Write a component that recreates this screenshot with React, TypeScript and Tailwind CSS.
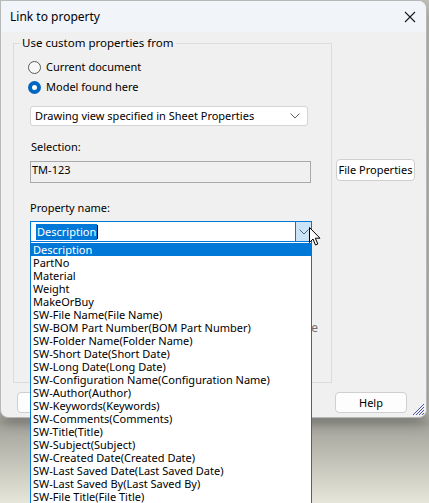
import React from "react";

const FONT = { fontFamily: '"Noto Sans", "Open Sans", sans-serif' };

const ITEMS = [
  "Description",
  "PartNo",
  "Material",
  "Weight",
  "MakeOrBuy",
  "SW-File Name(File Name)",
  "SW-BOM Part Number(BOM Part Number)",
  "SW-Folder Name(Folder Name)",
  "SW-Short Date(Short Date)",
  "SW-Long Date(Long Date)",
  "SW-Configuration Name(Configuration Name)",
  "SW-Author(Author)",
  "SW-Keywords(Keywords)",
  "SW-Comments(Comments)",
  "SW-Title(Title)",
  "SW-Subject(Subject)",
  "SW-Created Date(Created Date)",
  "SW-Last Saved Date(Last Saved Date)",
  "SW-Last Saved By(Last Saved By)",
  "SW-File Title(File Title)",
];

function Chevron() {
  return (
    <svg width="10" height="6" viewBox="0 0 10 6">
      <path d="M0.5 0.5 L5 5 L9.5 0.5" fill="none" stroke="#606060" strokeWidth="1" />
    </svg>
  );
}

function Radio({ checked, label }: { checked?: boolean; label: string }) {
  return (
    <div className="flex h-[20px] items-center gap-[5px] pl-[14px]">
      {checked ? (
        <span className="flex h-[13px] w-[13px] items-center justify-center rounded-full bg-[#0067c0]">
          <span className="h-[5px] w-[5px] rounded-full bg-white" />
        </span>
      ) : (
        <span className="h-[13px] w-[13px] rounded-full border border-[#5a5a5a] bg-[#f7f7f7]" />
      )}
      <span>{label}</span>
    </div>
  );
}

export default function App() {
  return (
    <div
      className="relative h-[503px] w-[429px] overflow-hidden bg-[linear-gradient(to_bottom,#c8c8c0_0%,#c0c0b8_82%,#a2a29a_84%,#e6e6da_100%)] text-[11px] leading-[16px] text-black"
      style={FONT}
    >
      <div className="relative h-[418px] w-[427px] rounded-tr-[8px] rounded-b-[8px] border border-[#b8b8b8] bg-[#f0f0f0] shadow-[0_4px_14px_rgba(0,0,0,0.35)]">
        {/* title bar */}
        <div className="flex h-[31px] items-center justify-between rounded-tr-[8px] bg-[#f1f4f9] pl-[9px] pr-[10px]">
          <span className="text-[12px]">Link to property</span>
          <svg width="12" height="12" viewBox="0 0 12 12">
            <path d="M1 1 L11 11 M11 1 L1 11" stroke="#1a1a1a" strokeWidth="1.1" />
          </svg>
        </div>

        <div className="flex gap-[4px] pl-[12px] pt-[11px]">
          {/* group box */}
          <div className="relative h-[340px] w-[319px] border border-[#dcdcdc]">
            <span className="absolute -top-[9px] left-[6px] bg-[#f0f0f0] px-[2px] text-[11.5px]">
              Use custom properties from
            </span>
            <div className="flex flex-col pt-[13px]">
              <Radio label="Current document" />
              <Radio checked label="Model found here" />

              <div className="ml-[16px] mt-[9px] flex h-[20px] w-[278px] items-center justify-between rounded-[3px] border border-[#d4d4d4] bg-white pl-[4px] pr-[7px]">
                <span>Drawing view specified in Sheet Properties</span>
                <Chevron />
              </div>

              <div className="ml-[17px] mt-[13px] h-[16px]">Selection:</div>
              <div className="ml-[16px] mt-[6px] h-[22px] w-[281px] border border-[#a9a9a9] bg-[#f0f0f0] pl-[1px]">
                TM-123
              </div>

              <div className="ml-[16px] mt-[17px] h-[16px]">Property name:</div>

              <div className="relative ml-[16px] mt-[5px] w-[282px]">
                <div className="flex h-[21px] items-center border border-[#0078d7] bg-white">
                  <div className="flex flex-1 items-center pl-[5px]">
                    <span className="bg-[#0078d7] px-[1px] text-white">Description</span>
                    <span className="h-[14px] w-px bg-black" />
                  </div>
                  <div className="flex h-full w-[16px] items-center justify-center border-l border-[#0078d7] bg-[#cce4f7]">
                    <Chevron />
                  </div>
                </div>

                {/* dropdown list, open over the dialog */}
                <div className="absolute left-0 top-full z-10 h-[300px] w-[282px] border-x border-[#0078d7] bg-white pt-[1px]">
                  {ITEMS.map((item, i) => (
                    <div
                      key={item}
                      className={
                        i === 0
                          ? "h-[13px] whitespace-nowrap bg-[#0078d7] pl-[2px] leading-[13px] text-white"
                          : "h-[13px] whitespace-nowrap pl-[2px] leading-[13px]"
                      }
                    >
                      {item}
                    </div>
                  ))}
                </div>
              </div>

              <div className="ml-[16px] mt-[78px] flex h-[16px] w-[288px] justify-end text-[#6d6d6d]">
                <span className="text-[12px]">e</span>
              </div>
            </div>
          </div>

          <div className="pt-[116px]">
            <button className="h-[22px] w-[79px] whitespace-nowrap rounded-[4px] border border-[#cfcfcf] bg-white">
              File Properties
            </button>
          </div>
        </div>

        {/* bottom buttons (left ones sit under the list) */}
        <div className="flex pl-[16px] pt-[9px]">
          <button className="h-[21px] w-[72px] rounded-[4px] border border-[#cfcfcf] bg-[#fdfdfd]" />
          <div className="flex-1" />
          <button className="mr-[19px] h-[21px] w-[72px] rounded-[4px] border border-[#cfcfcf] bg-[#fdfdfd]">
            Help
          </button>
        </div>

        {/* resize grip */}
        <svg width="14" height="14" viewBox="0 0 14 14" className="absolute bottom-[1px] right-[1px]">
          <path d="M2 13 L13 2 M5 13 L13 5 M8 13 L13 8 M11 13 L13 11" stroke="#1c2fa0" strokeWidth="0.8" />
        </svg>
      </div>

      {/* mouse cursor */}
      <svg width="13" height="20" viewBox="0 0 13 20" className="absolute left-[309px] top-[227px] z-20">
        <path
          d="M0.5 0.5 L0.5 15.5 L4 12 L6.5 18 L8.8 17 L6.3 11.2 L11 11.2 Z"
          fill="white"
          stroke="black"
          strokeWidth="1"
          strokeLinejoin="round"
        />
      </svg>
    </div>
  );
}
